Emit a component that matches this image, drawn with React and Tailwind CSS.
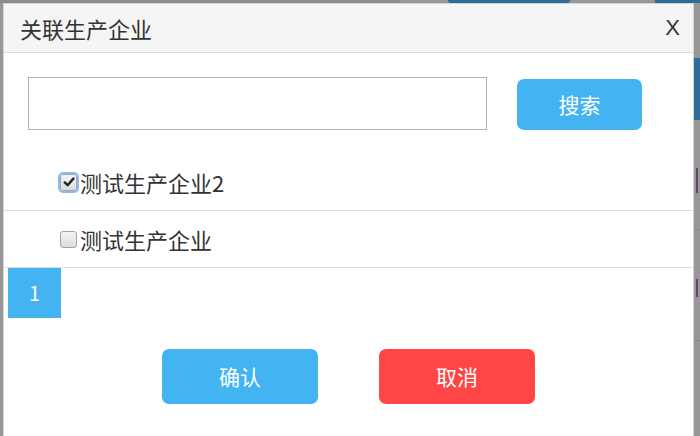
import React from "react";

const font = { fontFamily: '"Noto Sans CJK SC", "Noto Sans", sans-serif' };

function Check({ checked }) {
  return (
    <span
      className={
        "flex h-[17px] w-[17px] shrink-0 items-center justify-center rounded-[3px] border border-[#a3a3a3] bg-gradient-to-b from-[#f4f4f4] to-[#dcdcdc] " +
        (checked ? "outline outline-2 outline-[#8fb8f4]" : "")
      }
    >
      {checked && (
        <svg width="12" height="12" viewBox="0 0 12 12">
          <path d="M1.8 6.4 L4.6 9.2 L10.4 2.6" fill="none" stroke="#222" strokeWidth="2.4" strokeLinecap="round" strokeLinejoin="round" />
        </svg>
      )}
    </span>
  );
}

function Row({ label, checked }) {
  return (
    <div className="flex h-[57px] items-center border-b border-[#dedede] pl-[56px]">
      <Check checked={checked} />
      <span className="ml-[3px] text-[22px] leading-none text-[#333]">{label}</span>
    </div>
  );
}

export default function App() {
  return (
    <div className="relative h-[436px] w-[700px] overflow-hidden bg-[#979797]" style={font}>
      {/* backdrop */}
      <div className="flex h-full flex-col">
        <div className="flex h-[3px] shrink-0">
          <div className="w-[400px] bg-[#8c8c8c]" />
          <div className="w-[48px]" />
          <div className="w-[122px] rounded-b-[6px] bg-[#2d6c97]" />
          <div className="w-[85px]" />
          <div className="flex-1 bg-[#2d6c97]" />
        </div>
        <div className="flex flex-1">
          <div className="flex-1" />
          <div className="flex w-[6px] flex-col">
            <div className="h-[55px]" />
            <div className="h-[62px] bg-[#2d6c97]" />
            <div className="h-[48px]" />
            <div className="ml-[2px] h-[25px] w-[2px] bg-[#6b3f74]" />
            <div className="h-[37px] border-b border-[#8a8a8a]" />
            <div className="h-[49px]" />
            <div className="ml-[2px] h-[18px] w-[2px] bg-[#6b3f74]" />
            <div className="h-[44px] border-b border-[#8a8a8a]" />
          </div>
        </div>
      </div>

      {/* modal */}
      <div className="absolute bottom-0 left-[3px] right-[6px] top-[3px] flex flex-col border border-b-0 border-[#d4d4d4] bg-white">
        <div className="flex h-[49px] shrink-0 items-center justify-between border-b border-[#dcdcdc] bg-[#f5f5f5] pl-[16px] pr-[13px]">
          <span className="text-[22px] leading-none text-[#333]">关联生产企业</span>
          <span className="text-[22px] leading-none text-[#333]" style={{ fontFamily: '"Liberation Sans", sans-serif' }}>X</span>
        </div>

        <div className="mt-[24px] flex items-end pl-[24px]">
          <div className="h-[53px] w-[459px] border border-[#b3b3b3] bg-white" />
          <button className="ml-[30px] flex h-[51px] w-[125px] items-center justify-center rounded-[7px] bg-[#43b3f2] text-[21px] leading-none text-white">
            搜索
          </button>
        </div>

        <div className="mt-[24px]">
          <Row label="测试生产企业2" checked />
          <Row label="测试生产企业" />
        </div>

        <div className="pl-[4px]">
          <div className="flex h-[50px] w-[53px] items-center justify-center bg-[#43b3f2] text-[20px] leading-none text-white">
            1
          </div>
        </div>

        <div className="mt-[31px] flex justify-center gap-[61px]">
          <button className="flex h-[55px] w-[156px] items-center justify-center rounded-[7px] bg-[#43b3f2] text-[21px] leading-none text-white">
            确认
          </button>
          <button className="flex h-[55px] w-[156px] items-center justify-center rounded-[7px] bg-[#ff4545] text-[21px] leading-none text-white">
            取消
          </button>
        </div>
      </div>
    </div>
  );
}
